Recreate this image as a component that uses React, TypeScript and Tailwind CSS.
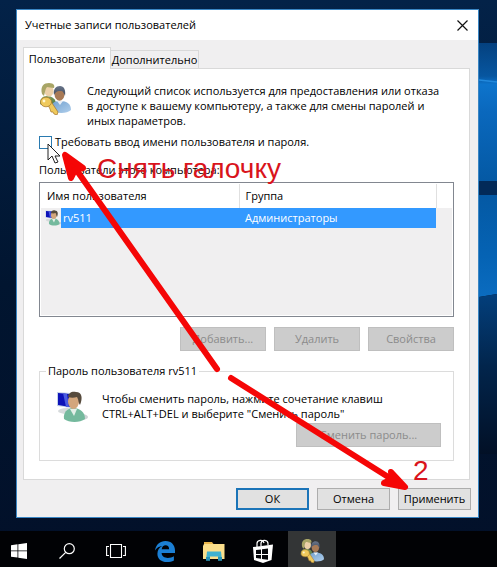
import type { ReactNode } from 'react';

function UsersIcon({ className }: { className: string }) {
  return (
    <svg viewBox="0 0 32 32" className={`shrink-0 ${className}`} aria-hidden="true">
      <defs>
        <linearGradient id="blueShirt" x1="0" y1="0" x2="1" y2="1">
          <stop offset="0" stopColor="#6f9fce" />
          <stop offset="1" stopColor="#b0cfec" />
        </linearGradient>
        <linearGradient id="greenShirt" x1="0" y1="0" x2="1" y2="1">
          <stop offset="0" stopColor="#93ad68" />
          <stop offset="1" stopColor="#4a7440" />
        </linearGradient>
        <linearGradient id="darkHair" x1="0" y1="0" x2="0" y2="1">
          <stop offset="0" stopColor="#69758a" />
          <stop offset="1" stopColor="#3f4a5c" />
        </linearGradient>
      </defs>
      <path d="M1 21c0-5 2-8 7-8s9 3 9 8c-4 3-12 3-16 0z" fill="url(#greenShirt)" />
      <ellipse cx="10" cy="8" rx="4.600" ry="5.500" fill="#ecd0a8" />
      <path d="M3 11C1 3 5 0 10 0s6 3 5 5c-3 0-5-1-7-1-2 2-2 6-3 9z" fill="#a8a566" />
      <path d="M12 27c0-6 2-9 9-9 7 0 11 3 11 9-4 4-15 4-20 0z" fill="url(#blueShirt)" />
      <path d="M18 18l3 4 3-4z" fill="#e8eef5" />
      <ellipse cx="20.500" cy="11" rx="5" ry="6.800" fill="#a87a56" />
      <path d="M15 12c-1-6 2-9 6-9s6 4 5 10c-1-3-2-5-4-5-3 0-5 0-7 4z" fill="url(#darkHair)" />
      <g stroke="#a3742a" strokeWidth="0.700" fill="#efc95c">
        <path d="M8 20l3-3 8 12-1 3-3-1-1-2-2 0-1-3z" />
        <ellipse cx="7" cy="19" rx="5.500" ry="4.800" />
      </g>
      <circle cx="5" cy="18" r="1.400" fill="#fff6d0" />
    </svg>
  );
}

function UserPcIcon({ className }: { className: string }) {
  return (
    <svg viewBox="0 0 32 32" className={`shrink-0 ${className}`} aria-hidden="true">
      <ellipse cx="11" cy="20" rx="9" ry="3" fill="#d6dadc" />
      <ellipse cx="26" cy="26" rx="6" ry="3" fill="#cdd2d4" />
      <path d="M1 1l14 1v15L1 15z" fill="#c4d2ea" />
      <path d="M2 2l12 1v13L2 14z" fill="#0d12b8" />
      <path d="M7 2l4 1 2 13-3 0z" fill="#4a5be0" />
      <path d="M8 28c-1-6 3-11 9-11 7 0 12 4 12 11-5 4-16 4-21 0z" fill="#74b99d" />
      <path d="M14 18l4 7 3-7z" fill="#e3efe8" />
      <ellipse cx="17.500" cy="10.500" rx="5.500" ry="7.500" fill="#d3a67c" />
      <path d="M12 6c0-4 4-6 8-5 6 0 7 6 4 13-2-2-1-5-3-8-3 1-6 1-9 0z" fill="#564a3c" />
    </svg>
  );
}

function Wallpaper() {
  return (
    <svg
      viewBox="0 0 100 567"
      preserveAspectRatio="none"
      className="absolute right-0 top-0 h-full w-25"
      aria-hidden="true"
    >
      <defs>
        <linearGradient id="beamTop" x1="0" y1="0" x2="0" y2="1">
          <stop offset="0" stopColor="#04417f" />
          <stop offset="0.240" stopColor="#0756a0" />
          <stop offset="0.300" stopColor="#0d74cc" />
          <stop offset="0.500" stopColor="#0a68bd" />
          <stop offset="1" stopColor="#0459a4" />
        </linearGradient>
        <linearGradient id="beamLow" x1="0" y1="0" x2="0" y2="1">
          <stop offset="0" stopColor="#0459a4" />
          <stop offset="0.600" stopColor="#0563b4" />
          <stop offset="1" stopColor="#0b6cc0" />
        </linearGradient>
        <linearGradient id="fade" x1="0" y1="0" x2="0" y2="1">
          <stop offset="0" stopColor="#033f7c" />
          <stop offset="0.450" stopColor="#02254c" />
          <stop offset="1" stopColor="#021026" />
        </linearGradient>
      </defs>
      <path d="M0 43h100v138H0z" fill="url(#beamTop)" />
      <path d="M0 80l82 0 18 2" stroke="#2289dc" strokeWidth="1.500" fill="none" />
      <path d="M0 181h100v14H0z" fill="#022a58" />
      <path d="M0 195h100v99l-18 3H0z" fill="url(#beamLow)" />
      <path d="M0 297h82l18-3v160H0z" fill="url(#fade)" />
    </svg>
  );
}

function PushButton({
  children,
  className = '',
  disabled = false,
}: {
  children: ReactNode;
  className?: string;
  disabled?: boolean;
}) {
  return (
    <button
      type="button"
      disabled={disabled}
      className={`text-center leading-4 disabled:border-[#bfbfbf] disabled:bg-[#cccccc] disabled:text-[#8b8b8b] ${className}`}
    >
      {children}
    </button>
  );
}

function TaskButton({
  label,
  className = '',
  children,
}: {
  label: string;
  className?: string;
  children: ReactNode;
}) {
  return (
    <button
      type="button"
      aria-label={label}
      className={`flex h-9 items-center justify-center pt-1 ${className}`}
    >
      {children}
    </button>
  );
}

function Taskbar() {
  return (
    <nav className="relative flex h-9 gap-px bg-[#010205]">
      <TaskButton label="Пуск" className="w-[42px] pr-1">
        <svg viewBox="0 0 16 16" className="size-4" fill="#fff">
          <path d="M0 2.200l6.500-.9v6.200H0zM7.300 1.200L16 0v7.500H7.300zM0 8.300h6.500v6.300L0 13.700zM7.300 8.300H16V16l-8.700-1.200z" />
        </svg>
      </TaskButton>
      <TaskButton label="Поиск" className="w-12">
        <svg viewBox="0 0 16 16" className="size-4" fill="none" stroke="#fff" strokeWidth="1.200">
          <circle cx="10.300" cy="5.700" r="5" />
          <path d="M6.700 9.300L.5 15.500" />
        </svg>
      </TaskButton>
      <TaskButton label="Представление задач" className="w-12">
        <svg viewBox="0 0 20 14" className="h-3.5 w-5" fill="none" stroke="#fff" strokeWidth="1.100">
          <path d="M4.500.5h11v13h-11zM3 2.500H.6v9H3M17 2.500h2.400v9H17" />
        </svg>
      </TaskButton>
      <TaskButton label="Edge" className="w-12">
        <svg viewBox="0 0 20 21" className="h-[21px] w-5" fill="#1b7fd4">
          <path d="M0 9.500C1 3.500 5 0 10.500 0 16.500 0 20 4.200 20 9.500V12H6.600c.2 3.300 2.900 4.900 6.200 4.900 2.300 0 4.300-.6 6.100-1.700v4.300c-2 1-4.300 1.500-6.900 1.500-5.600 0-9.600-3-9.600-8.300 0-3.500 1.900-6.200 4.900-7.700C4.300 5.300 1.600 6.800 0 9.500zm6.700-1.300h7.400c0-2.500-1.300-3.900-3.500-3.900-2.100 0-3.500 1.500-3.900 3.900z" />
        </svg>
      </TaskButton>
      <TaskButton label="Проводник" className="w-12">
        <svg viewBox="0 0 22 20" className="h-5 w-[22px]">
          <path d="M1 1h8l1.500 2H20v3H1z" fill="#e9b64c" />
          <path d="M0 5l1-2h20.500v15H0z" fill="#fbdf8c" />
          <path d="M4 10.500h14l1 9h-4v-4H7v4H3z" fill="#3fb2d0" />
          <path d="M3 16h4v3.500H3zM15 16h4v3.500h-4z" fill="#2792b4" />
        </svg>
      </TaskButton>
      <TaskButton label="Магазин" className="w-12">
        <svg viewBox="0 0 22 24" className="h-6 w-[22px]">
          <path d="M5 8V4.500C5 1 11 0 12 4M9 7V4c1-4 7-3 7 .5V6" fill="none" stroke="#fff" strokeWidth="1.200" />
          <path d="M1 8l20-2.500-1.500 15.500L11 24l-9-3z" fill="#fff" />
          <path d="M4 11l5-.6V15H4zM10 10.300l6-.7V15h-6zM4 16h5v3.800L4 19zM10 16h6v4.700L10 20z" fill="#05070b" />
        </svg>
      </TaskButton>
      <TaskButton label="Учетные записи пользователей" className="w-12 bg-[#333536]">
        <UsersIcon className="size-6" />
      </TaskButton>
    </nav>
  );
}

function Annotations() {
  return (
    <>
      <svg
        viewBox="0 0 462 510"
        className="pointer-events-none absolute left-0 top-0 h-[510px] w-[462px]"
        aria-hidden="true"
      >
        <path d="M31 134v16l4-4 3 7 3-1-3-6h5z" fill="#fff" stroke="#222" strokeWidth="1" />
        <g stroke="#f50606" strokeLinecap="round" strokeLinejoin="round" fill="#f50606">
          <path d="M200 359L58 158" strokeWidth="6" />
          <path d="M48 145L54 168L58 160L66 158z" strokeWidth="6" />
          <path d="M214 368L376 470" strokeWidth="6" />
          <path d="M388 477L367 473L375 469L374 462z" strokeWidth="6" />
        </g>
      </svg>
      <p className="pointer-events-none absolute left-20 top-[143px] whitespace-nowrap font-['Liberation_Sans',sans-serif] text-[28px] leading-8 text-[#d9141c]">
        Снять галочку
      </p>
      <p className="pointer-events-none absolute left-[396px] top-[445px] font-['Liberation_Sans',sans-serif] text-[28px] leading-8 text-[#d9141c]">
        2
      </p>
    </>
  );
}

function UsersTable() {
  return (
    <div className="h-[135px] border border-[#828790] bg-white p-px">
      <div className="h-full bg-[#f0eff0]">
        <table className="w-full table-fixed border-collapse text-left">
          <thead>
            <tr className="h-6 bg-white">
              <th className="w-[198px] border-r border-[#e0e0e0] p-0 pl-1.5 font-normal">Имя пользователя</th>
              <th className="border-r border-[#e0e0e0] p-0 pl-1.5 font-normal">Группа</th>
              <th className="w-4" />
            </tr>
          </thead>
          <tbody>
            <tr className="h-5 text-white">
              <td className="p-0">
                <div className="flex h-5 items-center pl-1">
                  <UserPcIcon className="size-4" />
                  <span className="h-5 flex-1 bg-[#3399ff] pl-0.5 leading-5">rv511</span>
                </div>
              </td>
              <td className="bg-[#3399ff] p-0 pl-1.5">Администраторы</td>
              <td className="p-0" />
            </tr>
          </tbody>
        </table>
      </div>
    </div>
  );
}

function AccountsDialog() {
  return (
    <section
      role="dialog"
      aria-labelledby="dialog-title"
      className="relative ml-4 mr-[18px] border border-[#3a86c4] bg-[#f0eff0] pb-[7px]"
    >
      <header className="flex h-[30px] items-center justify-between bg-white pl-2 pr-2.5">
        <h1 id="dialog-title">Учетные записи пользователей</h1>
        <button type="button" aria-label="Закрыть">
          <svg viewBox="0 0 11 11" className="size-[11px]" stroke="#111" strokeWidth="1.200">
            <path d="M.5.5l10 10M10.500.5l-10 10" />
          </svg>
        </button>
      </header>

      <div className="px-1.5 pt-[7px]">
        <div role="tablist" className="flex items-end">
          <button
            type="button"
            role="tab"
            aria-selected="true"
            className="relative -mb-px h-[22px] w-[88px] border border-b-0 border-[#d9d9d9] bg-white leading-5"
          >
            Пользователи
          </button>
          <button
            type="button"
            role="tab"
            aria-selected="false"
            className="h-[18px] w-[88px] border border-b-0 border-l-0 border-[#d9d9d9] leading-4"
          >
            Дополнительно
          </button>
        </div>

        <div role="tabpanel" className="mr-0.5 border border-[#d9d9d9] bg-white px-[15px] pb-[18px] pt-[14px]">
          <div className="flex gap-4">
            <UsersIcon className="size-8" />
            <p className="leading-[15px]">
              Следующий список используется для предоставления или отказа
              <br />
              в доступе к вашему компьютеру, а также для смены паролей и
              <br />
              иных параметров.
            </p>
          </div>

          <label className="mt-1.5 flex items-center gap-[3px] leading-4">
            <input
              type="checkbox"
              className="size-[13px] shrink-0 appearance-none border border-[#2a7ab0] bg-white"
            />
            Требовать ввод имени пользователя и пароля.
          </label>

          <h2 className="mb-1 mt-3 leading-4">Пользователи этого компьютера:</h2>
          <UsersTable />

          <div className="mt-2.5 flex justify-end gap-2">
            <PushButton disabled className="h-6 w-[86px] border">Добавить...</PushButton>
            <PushButton disabled className="h-6 w-[86px] border">Удалить</PushButton>
            <PushButton disabled className="h-6 w-[86px] border">Свойства</PushButton>
          </div>

          <fieldset className="mt-3 border border-[#dcdcdc] pb-[13px] pl-4 pr-3">
            <legend className="-ml-2.5 px-0.5 leading-4">Пароль пользователя rv511</legend>
            <div className="mt-3 flex gap-3.5">
              <UserPcIcon className="size-8" />
              <p className="leading-[15px]">
                Чтобы сменить пароль, нажмите сочетание клавиш
                <br />
                CTRL+ALT+DEL и выберите "Сменить пароль"
              </p>
            </div>
            <div className="flex justify-end">
              <PushButton disabled className="h-6 w-[145px] border">Сменить пароль...</PushButton>
            </div>
          </fieldset>
        </div>

        <div className="mr-px mt-2 flex justify-end gap-2">
          <PushButton className="h-[22px] w-[73px] border-2 border-[#1b74b8] bg-[#e1e1e1]">ОК</PushButton>
          <PushButton className="h-[22px] w-[73px] border border-[#adadad] bg-[#e1e1e1]">Отмена</PushButton>
          <PushButton className="h-[22px] w-[73px] border border-[#adadad] bg-[#e1e1e1]">Применить</PushButton>
        </div>
      </div>

      <Annotations />
    </section>
  );
}

export default function App() {
  return (
    <div className="relative flex min-h-screen flex-col justify-between bg-linear-to-b from-[#032248] via-[#011530] to-[#021029] pt-[9px] font-['Open_Sans','Noto_Sans',sans-serif] text-[11px] text-black">
      <Wallpaper />
      <AccountsDialog />
      <Taskbar />
    </div>
  );
}
